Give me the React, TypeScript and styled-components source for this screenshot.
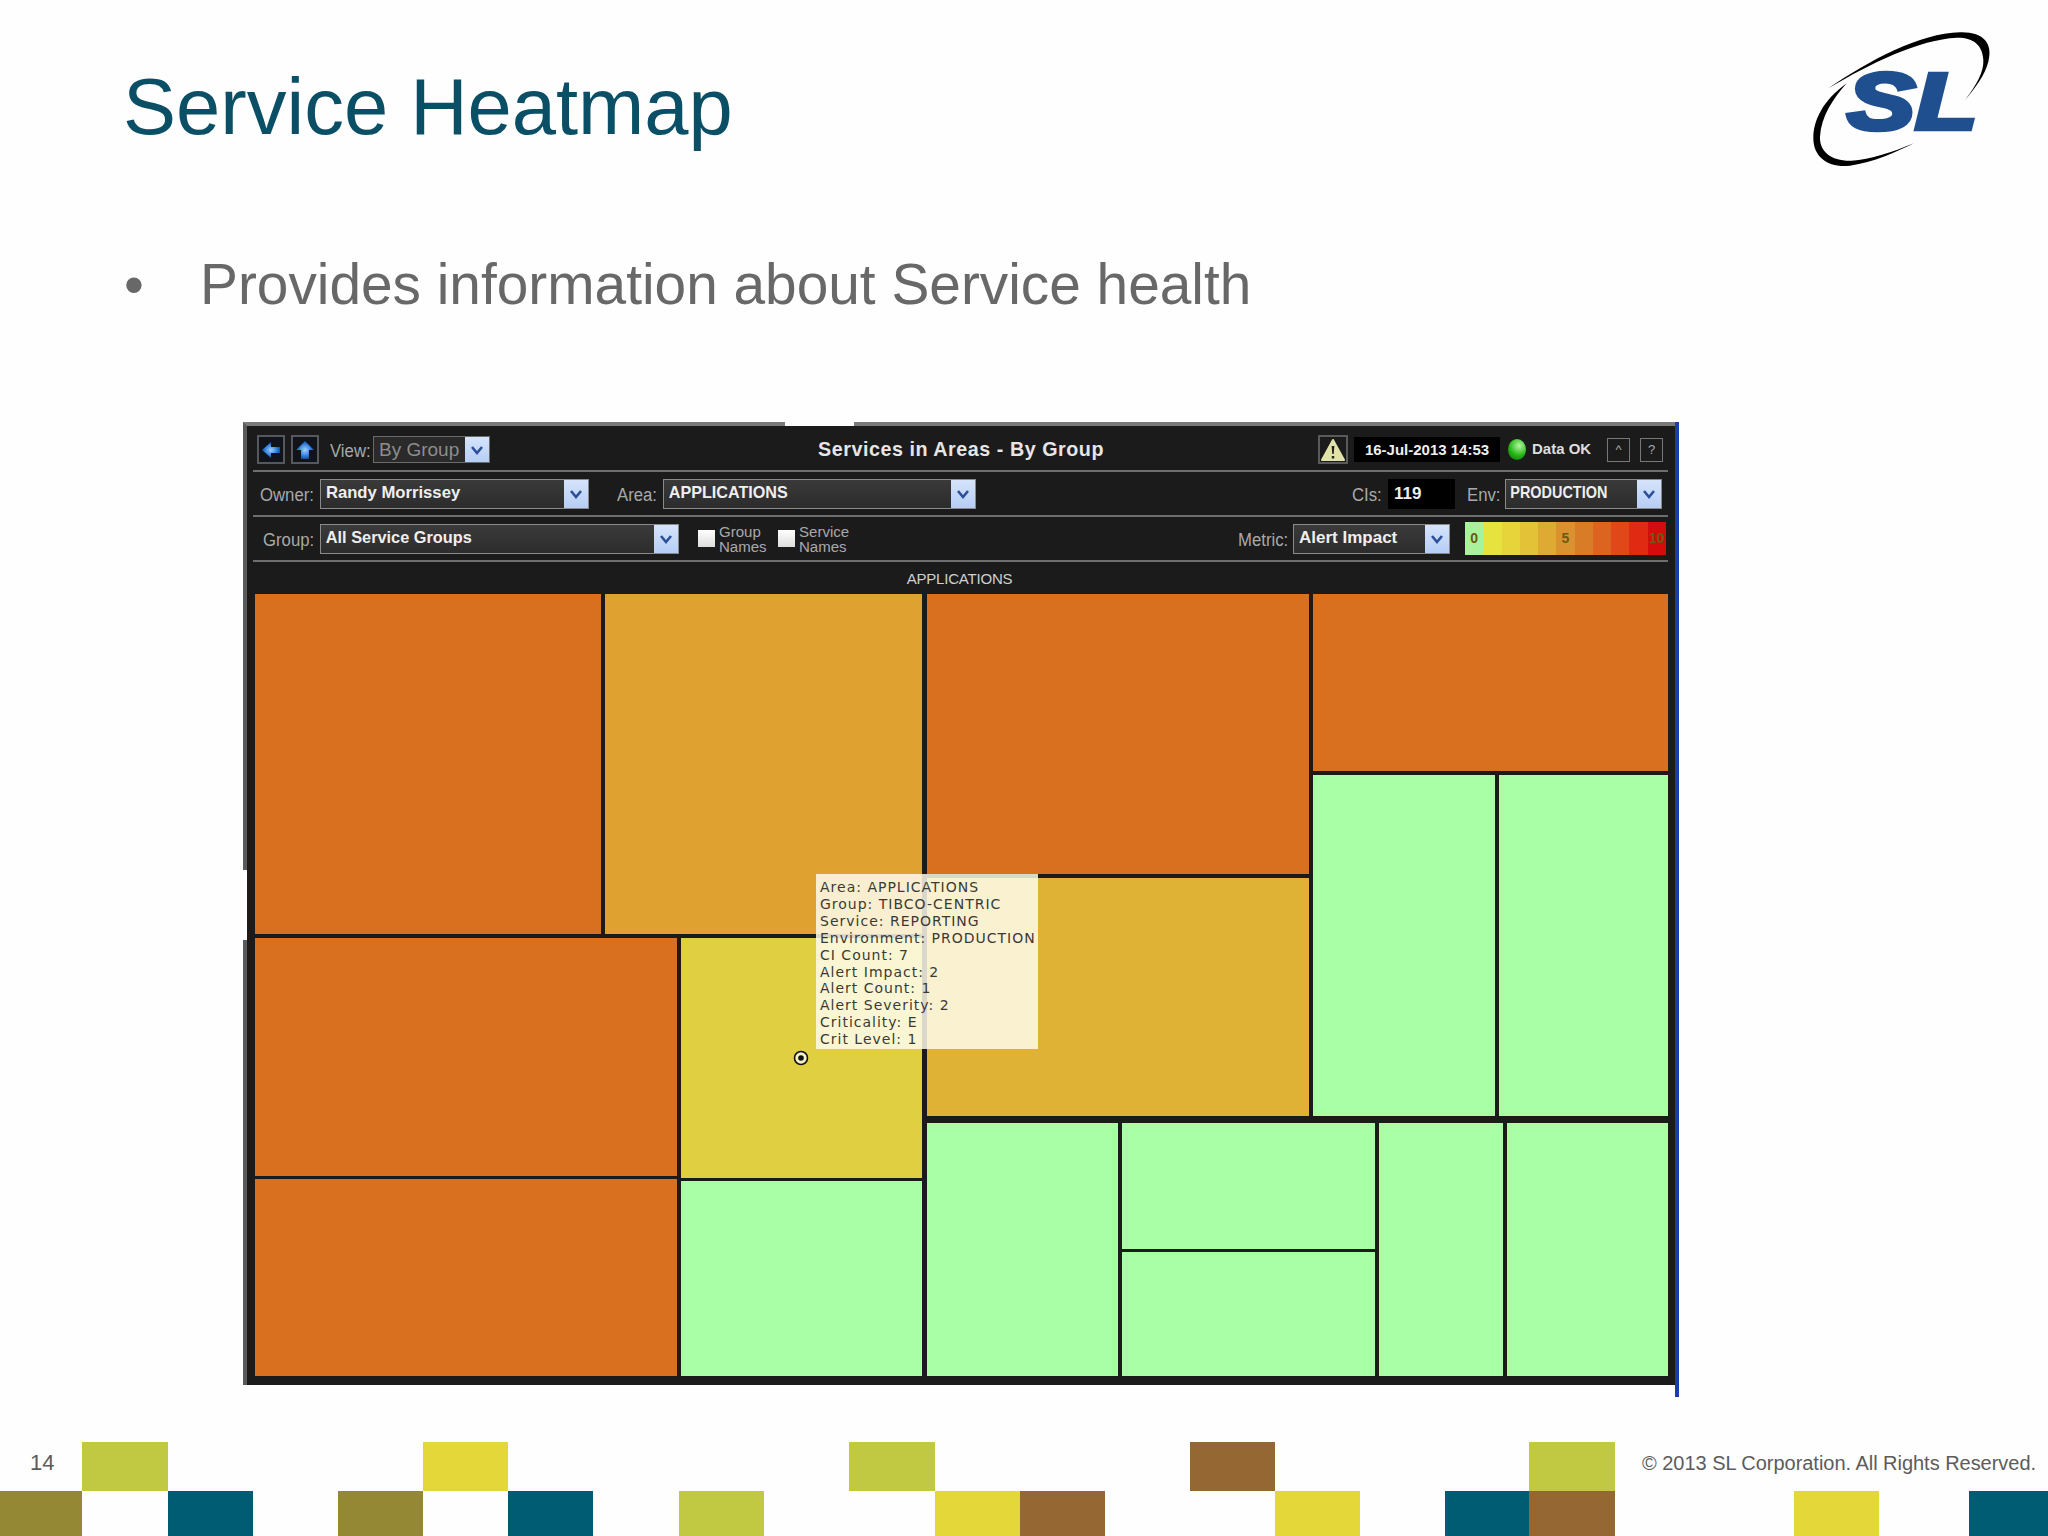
import React from 'react';
import styled, { createGlobalStyle } from 'styled-components';

const Global = createGlobalStyle`
  html, body { margin: 0; padding: 0; background: #fefefe; }
  #root { width: 2048px; height: 1536px; overflow: hidden; }
`;

const Slide = styled.div`
  width: 2048px;
  height: 1536px;
  display: flex;
  flex-direction: column;
  font-family: "Liberation Sans", Arial, sans-serif;
  background: #fefefe;
`;

const Header = styled.header`
  height: 196px;
  padding-left: 123px;
  display: flex;
  justify-content: space-between;
  align-items: flex-start;
`;
const Title = styled.h1`
  margin: 62px 0 0;
  font-size: 79.5px;
  line-height: 90px;
  font-weight: 400;
  color: #0b4f66;
`;
const Logo = styled.svg`
  width: 288px;
  height: 190px;
  flex: none;
`;

const Bullet = styled.div`
  height: 226px;
  padding-left: 124px;
  display: flex;
  align-items: flex-start;
  font-size: 56.8px;
  line-height: 70px;
  color: #686868;
`;
const Dot = styled.span`
  width: 76px;
  margin-top: 54px;
`;
const BulletText = styled.span`
  margin-top: 54px;
`;

const PanelWrap = styled.div`
  position: relative;
  margin-left: 243px;
  width: 1435px;
  height: 963px;
  box-sizing: border-box;
  background: #1b1b1b;
  border-top: 4px solid #7a7a7a;
  border-left: 4px solid #5a5a5a;
  &::before {
    content: "";
    position: absolute;
    left: 538px;
    top: -4px;
    width: 69px;
    height: 4px;
    background: #fefefe;
  }
  &::after {
    content: "";
    position: absolute;
    right: -1px;
    top: -4px;
    width: 4px;
    height: 975px;
    background: #1c3bac;
  }
`;
const LeftNotch = styled.div`
  position: absolute;
  left: -4px;
  top: 444px;
  width: 4px;
  height: 70px;
  background: #fefefe;
`;
const Bar = styled.div<{ $rule?: boolean; $h: number; $pl?: number; $pt?: number }>`
  height: ${p => p.$h}px;
  margin: 0 10px 0 6px;
  padding-left: ${p => p.$pl ?? 0}px;
  padding-top: ${p => p.$pt ?? 0}px;
  box-sizing: border-box;
  display: flex;
  align-items: center;
  ${p => p.$rule ? 'border-bottom: 2px solid #6e6e6e;' : ''}
`;
const Push = styled.div`
  flex: 1;
`;
const IconBtn = styled.button<{ $ml?: number }>`
  width: 28px;
  height: 29px;
  padding: 0;
  margin-right: 6px;
  margin-left: ${p => p.$ml ?? 0}px;
  background: #10141a;
  border: 2px solid #55585c;
  display: flex;
  align-items: center;
  justify-content: center;
`;
const Label = styled.span<{ $w: number; $ml?: number }>`
  width: ${p => p.$w}px;
  margin-left: ${p => p.$ml ?? 0}px;
  padding-top: 4px;
  font-size: 18px;
  color: #a9a9a9;
  white-space: nowrap;
  flex: none;
  transform: scaleX(.93);
  transform-origin: left center;
`;
const Select = styled.div<{ $w: number; $h?: number; $dim?: boolean }>`
  width: ${p => p.$w}px;
  height: ${p => p.$h ?? 30}px;
  box-sizing: border-box;
  flex: none;
  display: flex;
  align-items: center;
  background: ${p => p.$dim ? '#2a2a2a' : 'linear-gradient(#3a3a3a, #2c2c2c)'};
  border: 1px solid ${p => p.$dim ? '#6a6a6a' : '#8a8a8a'};
  color: ${p => p.$dim ? '#8d8d8d' : '#efefef'};
  font-size: ${p => p.$dim ? 19 : 17}px;
  font-weight: ${p => p.$dim ? 400 : 700};
`;
const SelectText = styled.span<{ $sx?: number; $pb?: number }>`
  flex: 1;
  padding-left: 5px;
  padding-bottom: ${p => p.$pb ?? 2}px;
  white-space: nowrap;
  overflow: hidden;
  transform: scaleX(${p => p.$sx ?? 1});
  transform-origin: left center;
`;
const Chevron = styled.span<{ $w?: number }>`
  width: ${p => p.$w ?? 24}px;
  align-self: stretch;
  flex: none;
  background: linear-gradient(#d6e4fb, #b6cdf5);
  display: flex;
  align-items: center;
  justify-content: center;
`;
const PanelTitle = styled.div`
  width: 500px;
  margin-left: 221px;
  text-align: center;
  font-size: 19.7px;
  font-weight: 700;
  letter-spacing: .55px;
  color: #e6e6e6;
  white-space: nowrap;
`;
const WarnBtn = styled.div`
  width: 30px;
  height: 29px;
  box-sizing: border-box;
  border: 2px solid #5a5a5a;
  display: flex;
  align-items: center;
  justify-content: center;
  flex: none;
`;
const DateBox = styled.div`
  width: 146px;
  height: 25px;
  margin-left: 6px;
  flex: none;
  background: #000;
  color: #efefef;
  font-size: 15px;
  font-weight: 700;
  display: flex;
  align-items: center;
  justify-content: center;
  white-space: nowrap;
`;
const Led = styled.span`
  width: 18px;
  height: 21px;
  margin-left: 8px;
  margin-right: 6px;
  border-radius: 50%;
  flex: none;
  background: radial-gradient(circle at 62% 32%, #b4f7a0, #22b414 55%, #0c6a08);
`;
const Status = styled.span`
  width: 75px;
  font-size: 15px;
  font-weight: 700;
  color: #dedede;
  white-space: nowrap;
  padding-bottom: 3px;
  flex: none;
`;
const SmallBtn = styled.span<{ $ml?: number }>`
  width: 23px;
  height: 24px;
  box-sizing: border-box;
  margin-left: ${p => p.$ml ?? 0}px;
  border: 1px solid #777;
  color: #aaa;
  font-size: 13px;
  display: flex;
  align-items: center;
  justify-content: center;
  flex: none;
`;
const CountBox = styled.span`
  width: 67px;
  height: 30px;
  box-sizing: border-box;
  margin-left: 5px;
  padding-left: 6px;
  background: #000;
  color: #efefef;
  font-size: 17px;
  font-weight: 700;
  line-height: 30px;
  flex: none;
`;
const Check = styled.span<{ $ml: number }>`
  width: 17px;
  height: 17px;
  margin-left: ${p => p.$ml}px;
  margin-right: 4px;
  background: linear-gradient(#fff, #ddd);
  flex: none;
`;
const CheckLabel = styled.span`
  font-size: 15.5px;
  line-height: 15px;
  color: #a9a9a9;
  width: 52px;
  flex: none;
  transform: scaleX(.97);
  transform-origin: left center;
`;
const Legend = styled.div`
  width: 201px;
  height: 33px;
  margin-left: 15px;
  flex: none;
  display: flex;
`;
const LegendCell = styled.span<{ $c: string }>`
  flex: 1;
  background: ${p => p.$c};
  color: #6b5a10;
  font-size: 14px;
  font-weight: 700;
  text-align: center;
  line-height: 33px;
`;
const AreaLabel = styled.div`
  flex: 1;
  text-align: center;
  font-size: 15px;
  color: #d0d0d0;
  letter-spacing: -.2px;
  padding-right: 2px;
`;
const EdgeGap = styled.span<{ $w: number }>`
  width: ${p => p.$w}px;
  flex: none;
`;

const TreeMap = styled.div`
  position: relative;
  margin: 0 6px 0 8px;
  height: 782px;
  display: flex;
  gap: 5px;
`;
const Col = styled.div<{ $w?: number; $h?: number; $gap?: number }>`
  display: flex;
  flex-direction: column;
  gap: ${p => p.$gap ?? 3}px;
  ${p => p.$w ? `width: ${p.$w}px;` : ''}
  ${p => p.$h ? `height: ${p.$h}px;` : ''}
  flex: none;
`;
const Row = styled.div<{ $w?: number; $h?: number; $gap?: number }>`
  display: flex;
  gap: ${p => p.$gap ?? 4}px;
  ${p => p.$w ? `width: ${p.$w}px;` : ''}
  ${p => p.$h ? `height: ${p.$h}px;` : ''}
  flex: none;
`;
const Tile = styled.div<{ $c: string; $w?: number; $h?: number }>`
  background: ${p => p.$c};
  flex: ${p => (p.$w || p.$h) ? 'none' : 1};
  ${p => p.$w ? `width: ${p.$w}px;` : ''}
  ${p => p.$h ? `height: ${p.$h}px;` : ''}
`;
const Tooltip = styled.div`
  position: absolute;
  left: 561px;
  top: 280px;
  width: 222px;
  height: 175px;
  box-sizing: border-box;
  padding: 5px 0 0 4px;
  background: rgba(255, 253, 240, .84);
  color: #3a3a34;
  font-family: "DejaVu Sans", sans-serif;
  font-size: 14px;
  line-height: 16.9px;
  letter-spacing: 1px;
  white-space: nowrap;
`;
const Cursor = styled.svg`
  position: absolute;
  left: 538px;
  top: 456px;
  width: 16px;
  height: 16px;
`;

const Footer = styled.footer`
  margin-top: auto;
  display: flex;
  flex-direction: column;
`;
const FootRow = styled.div<{ $h: number }>`
  height: ${p => p.$h}px;
  display: flex;
`;
const Square = styled.div<{ $w: number; $c?: string }>`
  width: ${p => p.$w}px;
  flex: none;
  background: ${p => p.$c ?? 'transparent'};
`;
const PageNo = styled.div`
  width: 82px;
  flex: none;
  padding-left: 30px;
  box-sizing: border-box;
  font-size: 22px;
  line-height: 42px;
  color: #5c5c5c;
`;
const Copy = styled.div`
  padding-left: 27px;
  font-size: 20px;
  line-height: 42px;
  color: #5c5c5c;
  white-space: nowrap;
  letter-spacing: -.03px;
`;

const LIME = '#c1c943';
const YEL = '#e4d73a';
const OLIVE = '#958835';
const TEAL = '#005c72';
const BROWN = '#956833';

const ORANGE = '#d9701f';
const AMBER = '#dfa130';
const AMBER2 = '#dfb236';
const YELLOW = '#e0d041';
const GREEN = '#a9ffa5';

const Chev = () => (
  <svg width="14" height="10" viewBox="0 0 14 10">
    <path d="M2 2 L7 8 L12 2" fill="none" stroke="#2b4f9a" strokeWidth="2.6" />
  </svg>
);

const LEGEND = ['#a9f29a', '#e6e23e', '#e6d43a', '#e4c238', '#dfaa34', '#da9230', '#d87c28', '#dc6420', '#e0481a', '#e02a12', '#d60c0c'];
const TIP = [
  'Area: APPLICATIONS',
  'Group: TIBCO-CENTRIC',
  'Service: REPORTING',
  'Environment: PRODUCTION',
  'CI Count: 7',
  'Alert Impact: 2',
  'Alert Count: 1',
  'Alert Severity: 2',
  'Criticality: E',
  'Crit Level: 1',
];

export default function App() {
  return (
    <Slide>
      <Global />
      <Header>
        <Title>Service Heatmap</Title>
        <Logo viewBox="0 0 864 570">
          <path fill="#000" d="M205 265 C330 180 480 100 600 97 C670 95 700 130 685 185 C675 225 645 265 615 300 C650 255 672 215 670 180 C668 135 640 112 590 113 C480 118 330 190 205 265 Z" />
          <path fill="#000" d="M260 250 C190 300 160 360 160 415 C160 475 210 505 270 497 C340 488 410 455 462 430 C400 455 330 480 275 482 C215 484 178 455 180 410 C183 350 220 295 260 250 Z" />
          <text x="262" y="386" fontFamily="Liberation Sans" fontWeight="700" fontStyle="italic" fontSize="240" fill="#1f4f8f" stroke="#1f4f8f" strokeWidth="14" textLength="390" lengthAdjust="spacingAndGlyphs">SL</text>
        </Logo>
      </Header>
      <Bullet>
        <Dot>•</Dot>
        <BulletText>Provides information about Service health</BulletText>
      </Bullet>
      <PanelWrap>
        <LeftNotch />
        <Bar $rule $h={46} $pt={3}>
          <IconBtn $ml={4}>
            <svg width="22" height="22" viewBox="0 0 22 22">
              <defs>
                <radialGradient id="arrowGlow" cx="50%" cy="50%" r="55%">
                  <stop offset="0%" stopColor="#a8d0f5" />
                  <stop offset="60%" stopColor="#2f7fe0" />
                  <stop offset="100%" stopColor="#123f90" />
                </radialGradient>
              </defs>
              <path d="M2 11 L11 3 V8 H20 V14 H11 V19 Z" fill="url(#arrowGlow)" />
            </svg>
          </IconBtn>
          <IconBtn>
            <svg width="22" height="22" viewBox="0 0 22 22">
              <path d="M11 2 L20 11 H15 V20 H7 V11 H2 Z" fill="url(#arrowGlow)" />
            </svg>
          </IconBtn>
          <Label $w={43} $ml={5}>View:</Label>
          <Select $w={117} $h={27} $dim>
            <SelectText $pb={0}>By Group</SelectText>
            <Chevron><Chev /></Chevron>
          </Select>
          <PanelTitle>Services in Areas - By Group</PanelTitle>
          <Push />
          <WarnBtn>
            <svg width="26" height="24" viewBox="0 0 26 24">
              <path d="M13 2 L24 22 H2 Z" fill="#e0e2a8" stroke="#e0e2a8" strokeWidth="2" strokeLinejoin="round" />
              <path d="M11.6 8 H14.4 L13.7 16 H12.3 Z M11.8 18 H14.2 V20.4 H11.8 Z" fill="#222" />
            </svg>
          </WarnBtn>
          <DateBox>16-Jul-2013 14:53</DateBox>
          <Led />
          <Status>Data OK</Status>
          <SmallBtn>^</SmallBtn>
          <SmallBtn $ml={10}>?</SmallBtn>
          <EdgeGap $w={5} />
        </Bar>
        <Bar $rule $h={45} $pl={7}>
          <Label $w={60}>Owner:</Label>
          <Select $w={269}>
            <SelectText $sx={.98}>Randy Morrissey</SelectText>
            <Chevron><Chev /></Chevron>
          </Select>
          <Label $w={46} $ml={28}>Area:</Label>
          <Select $w={313}>
            <SelectText $sx={.95}>APPLICATIONS</SelectText>
            <Chevron><Chev /></Chevron>
          </Select>
          <Push />
          <Label $w={31}>CIs:</Label>
          <CountBox>119</CountBox>
          <Label $w={38} $ml={12}>Env:</Label>
          <Select $w={157}>
            <SelectText $sx={.85}>PRODUCTION</SelectText>
            <Chevron><Chev /></Chevron>
          </Select>
          <EdgeGap $w={6} />
        </Bar>
        <Bar $rule $h={45} $pl={10}>
          <Label $w={57}>Group:</Label>
          <Select $w={359}>
            <SelectText $sx={.96}>All Service Groups</SelectText>
            <Chevron><Chev /></Chevron>
          </Select>
          <Check $ml={19} />
          <CheckLabel>Group Names</CheckLabel>
          <Check $ml={7} />
          <CheckLabel>Service Names</CheckLabel>
          <Push />
          <Label $w={55}>Metric:</Label>
          <Select $w={157}>
            <SelectText>Alert Impact</SelectText>
            <Chevron><Chev /></Chevron>
          </Select>
          <Legend>
            {LEGEND.map((c, i) => (
              <LegendCell key={c} $c={c}>{i === 0 ? '0' : i === 5 ? '5' : i === 10 ? '10' : ''}</LegendCell>
            ))}
          </Legend>
          <EdgeGap $w={2} />
        </Bar>
        <Bar $h={32}>
          <AreaLabel>APPLICATIONS</AreaLabel>
        </Bar>
        <TreeMap>
          <Col $w={667} $gap={4}>
            <Row $h={340}>
              <Tile $c={ORANGE} $w={346} />
              <Tile $c={AMBER} />
            </Row>
            <Row $h={438}>
              <Col $w={422}>
                <Tile $c={ORANGE} $h={238} />
                <Tile $c={ORANGE} />
              </Col>
              <Col $w={241}>
                <Tile $c={YELLOW} $h={240} />
                <Tile $c={GREEN} />
              </Col>
            </Row>
          </Col>
          <Col $w={741} $gap={7}>
            <Row $h={522}>
              <Col $w={382} $gap={4}>
                <Tile $c={ORANGE} $h={280} />
                <Tile $c={AMBER2} />
              </Col>
              <Col $w={355} $gap={4}>
                <Tile $c={ORANGE} $h={177} />
                <Row $h={341}>
                  <Tile $c={GREEN} $w={182} />
                  <Tile $c={GREEN} />
                </Row>
              </Col>
            </Row>
            <Row $h={253}>
              <Tile $c={GREEN} $w={191} />
              <Col $w={253}>
                <Tile $c={GREEN} $h={126} />
                <Tile $c={GREEN} />
              </Col>
              <Tile $c={GREEN} $w={124} />
              <Tile $c={GREEN} />
            </Row>
          </Col>
          <Tooltip>
            {TIP.map(t => <div key={t}>{t}</div>)}
          </Tooltip>
          <Cursor viewBox="0 0 16 16">
            <circle cx="8" cy="8" r="6.5" fill="#f4f0c8" stroke="#111" strokeWidth="1.6" />
            <circle cx="8" cy="8" r="2.8" fill="#111" />
          </Cursor>
        </TreeMap>
      </PanelWrap>
      <Footer>
        <FootRow $h={49}>
          <PageNo>14</PageNo>
          <Square $w={86} $c={LIME} />
          <Square $w={255} />
          <Square $w={85} $c={YEL} />
          <Square $w={341} />
          <Square $w={86} $c={LIME} />
          <Square $w={255} />
          <Square $w={85} $c={BROWN} />
          <Square $w={254} />
          <Square $w={86} $c={LIME} />
          <Copy>© 2013 SL Corporation. All Rights Reserved.</Copy>
        </FootRow>
        <FootRow $h={45}>
          <Square $w={82} $c={OLIVE} />
          <Square $w={86} />
          <Square $w={85} $c={TEAL} />
          <Square $w={85} />
          <Square $w={85} $c={OLIVE} />
          <Square $w={85} />
          <Square $w={85} $c={TEAL} />
          <Square $w={86} />
          <Square $w={85} $c={LIME} />
          <Square $w={171} />
          <Square $w={85} $c={YEL} />
          <Square $w={85} $c={BROWN} />
          <Square $w={170} />
          <Square $w={85} $c={YEL} />
          <Square $w={85} />
          <Square $w={84} $c={TEAL} />
          <Square $w={86} $c={BROWN} />
          <Square $w={179} />
          <Square $w={85} $c={YEL} />
          <Square $w={90} />
          <Square $w={80} $c={TEAL} />
        </FootRow>
      </Footer>
    </Slide>
  );
}
